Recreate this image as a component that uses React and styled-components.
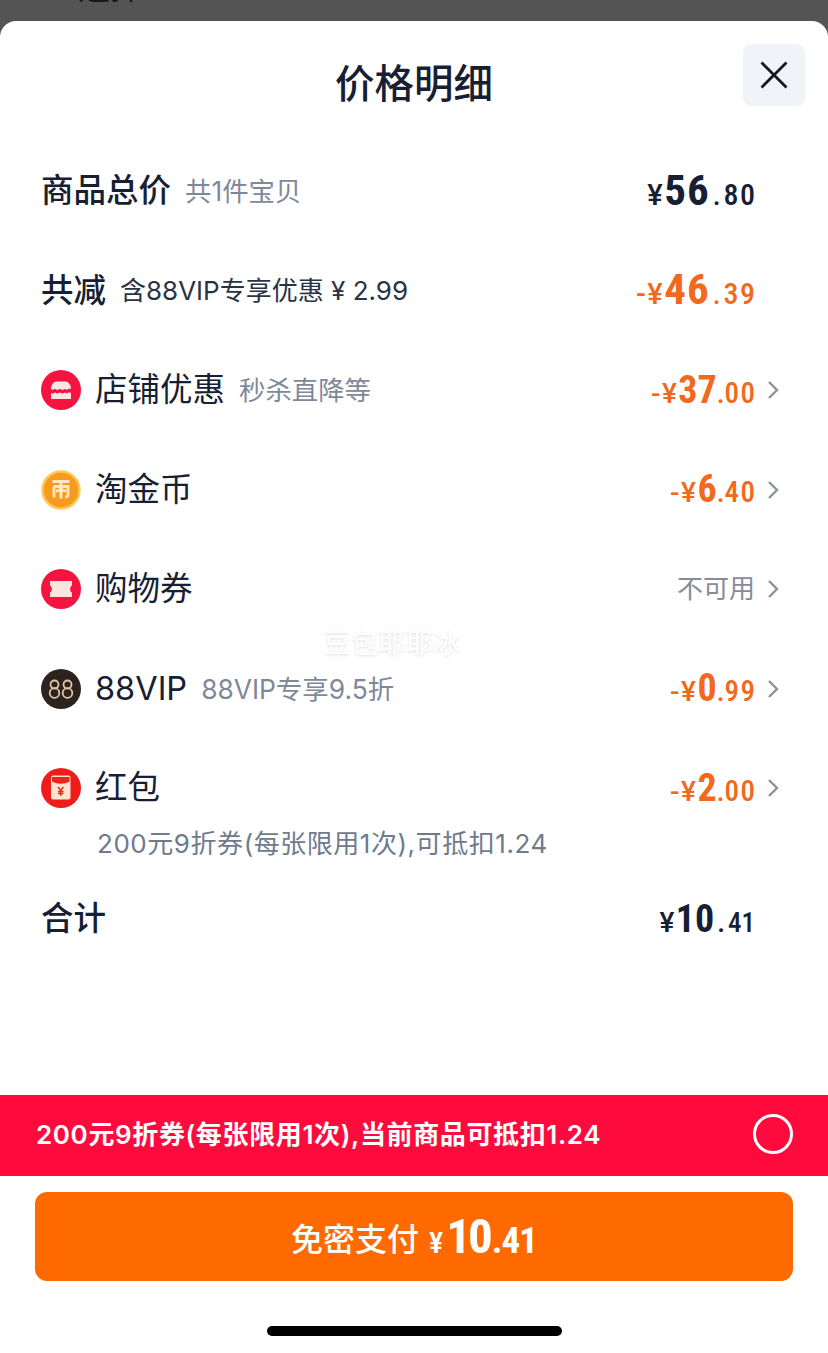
import React from 'react';
import styled, { createGlobalStyle } from 'styled-components';

const GlobalStyle = createGlobalStyle`
  html, body {
    margin: 0;
    padding: 0;
    background: #545454;
  }
  body {
    font-family: Inter, "Noto Sans CJK SC", "Noto Sans", sans-serif;
  }
`;

const Screen = styled.div`
  width: 828px;
  height: 1353px;
  display: flex;
  flex-direction: column;
  overflow: hidden;
  background: #545454;
`;

const Backdrop = styled.div`
  height: 21px;
  flex: none;
  padding-left: 78px;
  overflow: hidden;
  color: #16181c;
  font-size: 32px;
  line-height: 40px;
  & > span {
    display: block;
    margin-top: -32px;
  }
`;

const Sheet = styled.div`
  position: relative;
  flex: 1;
  display: flex;
  flex-direction: column;
  background: #fff;
  border-radius: 16px 16px 0 0;
`;

const Header = styled.div`
  display: grid;
  grid-template-columns: 1fr auto 1fr;
  padding: 23px 23px 0;
`;

const Title = styled.h1`
  grid-column: 2;
  margin: 15px 0 0;
  color: #172033;
  font-size: 39.5px;
  line-height: 50px;
  font-weight: 500;
`;

const CloseButton = styled.div`
  grid-column: 3;
  justify-self: end;
  width: 62px;
  height: 62px;
  display: flex;
  align-items: center;
  justify-content: center;
  background: #f0f3f7;
  border-radius: 8px;
`;

const List = styled.div`
  display: flex;
  flex-direction: column;
  gap: 59.5px;
  margin-top: 62px;
`;

const Row = styled.div`
  height: 40px;
  display: flex;
  align-items: center;
  padding: 0 49px 0 41px;
`;

const IconWrap = styled.div`
  width: 40px;
  height: 40px;
  flex: none;
  margin-right: 14px;
`;

const Label = styled.span`
  color: #172033;
  font-size: 32.5px;
  line-height: 40px;
  font-weight: ${(p) => (p.$bold ? 500 : 400)};
  white-space: nowrap;
`;

const Note = styled.span`
  margin-left: 14px;
  color: ${(p) => (p.$dark ? '#2a3344' : '#7f8899')};
  font-size: ${(p) => (p.$dark ? 26 : 26.4)}px;
  line-height: 40px;
  white-space: nowrap;
`;

const Value = styled.div`
  margin: 0 0 1px auto;
  display: flex;
  align-items: baseline;
  font-family: "Roboto Condensed", Roboto, "Noto Sans", sans-serif;
  font-weight: 500;
  color: ${(p) => (p.$accent ? '#f2681d' : '#172033')};
`;

const Currency = styled.span`
  font-family: Roboto, "Noto Sans", sans-serif;
  font-size: ${(p) => (p.$large ? 29 : 28)}px;
  letter-spacing: 1.5px;
`;

const Fraction = styled.span`
  font-size: ${(p) => p.$size}px;
  letter-spacing: ${(p) => p.$spacing}px;
  margin-right: ${(p) => -p.$spacing}px;
`;

const Dot = styled.span`
  margin: 0 ${(p) => p.$gap}px;
  font-size: 28px;
`;

const Whole = styled.span`
  font-size: ${(p) => (p.$large ? 43 : 38)}px;
  font-weight: 700;
  line-height: 40px;
  letter-spacing: ${(p) => (p.$large ? 1 : 0)}px;
`;

const Muted = styled.span`
  margin-left: auto;
  color: #858c98;
  font-size: 26px;
  line-height: 40px;
`;

const ChevronSlot = styled.div`
  width: 24px;
  height: 24px;
  flex: none;
  display: flex;
  align-items: center;
  justify-content: flex-end;
`;

const Detail = styled.div`
  margin: 21px 0 0 97px;
  color: #6f7a8d;
  font-size: 26px;
  line-height: 30px;
  letter-spacing: 0.55px;
  white-space: nowrap;
`;

const TotalRow = styled(Row)`
  margin-top: 40px;
`;

const Watermark = styled.div`
  position: absolute;
  left: 323px;
  top: 605px;
  color: #fff;
  font-size: 27.5px;
  line-height: 34px;
  text-shadow: 0 1px 3px rgba(0, 0, 0, 0.14);
`;

const Footer = styled.div`
  margin-top: auto;
`;

const CouponBar = styled.div`
  height: 81px;
  box-sizing: border-box;
  padding: 0 35px 4px 36px;
  display: flex;
  align-items: center;
  justify-content: space-between;
  background: #ff0a3c;
  color: #fff;
  font-size: 26px;
  font-weight: 600;
  letter-spacing: 0.63px;
`;

const CouponText = styled.span`
  margin-bottom: 2px;
`;

const Radio = styled.div`
  width: 40px;
  height: 40px;
  box-sizing: border-box;
  border: 3px solid #fff;
  border-radius: 50%;
`;

const PayButton = styled.div`
  height: 89px;
  margin: 16px 35px 0;
  display: flex;
  align-items: center;
  justify-content: center;
  background: #ff6a00;
  border-radius: 12px;
  color: #fff;
`;

const PayText = styled.span`
  font-size: 32px;
  font-weight: 500;
  margin-right: 10px;
`;

const PayValue = styled.div`
  display: flex;
  align-items: baseline;
  font-family: "Roboto Condensed", Roboto, sans-serif;
  font-weight: 700;
`;

const PayCurrency = styled.span`
  font-size: 30px;
  font-weight: 500;
  margin-right: 3px;
`;

const PayWhole = styled.span`
  font-size: 49px;
  line-height: 50px;
  letter-spacing: -3px;
`;

const PayFraction = styled.span`
  margin-left: 2px;
  font-size: 37px;
  letter-spacing: -1px;
`;

const HomeBar = styled.div`
  width: 295px;
  height: 10px;
  margin: 45px auto 17px;
  background: #000;
  border-radius: 5px;
`;

const Chevron = () => (
  <svg width="12" height="20" viewBox="0 0 12 20" fill="none">
    <path d="M2 2 L10 10 L2 18" stroke="#8d9199" strokeWidth="2.4" />
  </svg>
);

const CloseIcon = () => (
  <svg width="30" height="30" viewBox="0 0 30 30" fill="none">
    <path d="M2.500 2.500 L27.500 27.500 M27.500 2.500 L2.500 27.500" stroke="#14171f" strokeWidth="2.800" />
  </svg>
);

const StoreIcon = () => (
  <svg width="40" height="40" viewBox="0 0 40 40">
    <circle cx="20" cy="20" r="20" fill="#f5133f" />
    <path d="M10 19 C10 14 13 11.500 16 11.500 H24 C27 11.500 30 14 30 19 C27.500 17 26.500 21 25 19.500 C23.500 18 22 21 20 19.500 C18 18 16.500 21 15 19.500 C13.500 18 12.500 21 10 19 Z" fill="#fbe6e6" />
    <path d="M10 23 C12.500 25 13.500 21.500 15 23 C16.500 24.500 18 21.500 20 23 C22 24.500 23.500 21.500 25 23 C26.500 24.500 27.500 21 30 23 V29 H10 Z" fill="#fbe6e6" />
  </svg>
);

const CoinIcon = () => (
  <svg width="40" height="40" viewBox="0 0 40 40">
    <circle cx="20" cy="20" r="18.500" fill="#f79a1e" stroke="#ffc859" strokeWidth="2.500" />
    <path d="M11.500 11.500 H28.500 M20 11.500 V28.500 M13 16.500 H27 V25 C27 26.500 26 27 24 27 M13 16.500 V27.500 M15 21 C18 21 20 19 20 17 C20 19 22 21 25 21" fill="none" stroke="#ffe9c4" strokeWidth="2.800" />
  </svg>
);

const TicketIcon = () => (
  <svg width="40" height="40" viewBox="0 0 40 40">
    <circle cx="20" cy="20" r="20" fill="#f5133f" />
    <path d="M9 12 H31 V16.500 C28.500 17.500 28.500 22.500 31 23.500 V28 H9 V23.500 C11.500 22.500 11.500 17.500 9 16.500 Z" fill="#fbe4dc" />
  </svg>
);

const VipIcon = () => (
  <svg width="40" height="40" viewBox="0 0 40 40">
    <circle cx="20" cy="20" r="20" fill="#2c2320" />
    <g fill="none" stroke="#e2c6a0" strokeWidth="1.800">
      <circle cx="13.500" cy="15.500" r="4" />
      <circle cx="13.500" cy="24" r="4.800" />
      <circle cx="26.500" cy="15.500" r="4" />
      <circle cx="26.500" cy="24" r="4.800" />
    </g>
  </svg>
);

const PacketIcon = () => (
  <svg width="40" height="40" viewBox="0 0 40 40">
    <circle cx="20" cy="20" r="20" fill="#f01c1c" />
    <rect x="10" y="7.500" width="19.500" height="24" rx="2" fill="#fde4d0" />
    <path d="M11 9 H28.500 V13.500 C23 16.500 16.500 16.500 11 13.500 Z" fill="#e8261c" />
    <path d="M17 19 L19.750 22.500 L22.500 19 M17 23.500 H22.500 M17 25.500 H22.500 M19.750 22.500 V28" fill="none" stroke="#e8261c" strokeWidth="1.300" />
  </svg>
);

const Price = ({ prefix, whole, fraction, accent, large, total }) => (
  <Value $accent={accent}>
    <Currency $large={large}>{prefix}</Currency>
    <Whole $large={large}>{whole}</Whole>
    <Dot $gap={large || total ? 3 : 0}>.</Dot>
    <Fraction $size={total ? 27 : large ? 30 : 29} $spacing={total ? 0 : 1.5}>{fraction}</Fraction>
  </Value>
);

const discounts = [
  { key: 'store', icon: <StoreIcon />, label: '店铺优惠', note: '秒杀直降等', whole: '37', fraction: '00' },
  { key: 'coin', icon: <CoinIcon />, label: '淘金币', whole: '6', fraction: '40' },
  { key: 'ticket', icon: <TicketIcon />, label: '购物券', muted: '不可用' },
  { key: 'vip', icon: <VipIcon />, label: '88VIP', note: '88VIP专享9.5折', whole: '0', fraction: '99' },
  { key: 'packet', icon: <PacketIcon />, label: '红包', whole: '2', fraction: '00' },
];

const App = () => {
  return (
    <Screen>
      <GlobalStyle />
      <Backdrop>
        <span>选择</span>
      </Backdrop>
      <Sheet>
        <Header>
          <Title>价格明细</Title>
          <CloseButton>
            <CloseIcon />
          </CloseButton>
        </Header>

        <List>
          <Row>
            <Label $bold>商品总价</Label>
            <Note>共1件宝贝</Note>
            <Price large prefix="¥" whole="56" fraction="80" />
            <ChevronSlot />
          </Row>
          <Row>
            <Label $bold>共减</Label>
            <Note $dark>含88VIP专享优惠 ¥ 2.99</Note>
            <Price large accent prefix="-¥" whole="46" fraction="39" />
            <ChevronSlot />
          </Row>
          {discounts.map((item) => (
            <Row key={item.key}>
              <IconWrap>{item.icon}</IconWrap>
              <Label>{item.label}</Label>
              {item.note && <Note>{item.note}</Note>}
              {item.muted ? (
                <Muted>{item.muted}</Muted>
              ) : (
                <Price accent prefix="-¥" whole={item.whole} fraction={item.fraction} />
              )}
              <ChevronSlot>
                <Chevron />
              </ChevronSlot>
            </Row>
          ))}
        </List>

        <Detail>200元9折券(每张限用1次),可抵扣1.24</Detail>

        <TotalRow>
          <Label $bold>合计</Label>
          <Price total prefix="¥" whole="10" fraction="41" />
          <ChevronSlot />
        </TotalRow>

        <Watermark>豆包耶耶冰</Watermark>

        <Footer>
          <CouponBar>
            <CouponText>200元9折券(每张限用1次),当前商品可抵扣1.24</CouponText>
            <Radio />
          </CouponBar>
          <PayButton>
            <PayText>免密支付</PayText>
            <PayValue>
              <PayCurrency>¥</PayCurrency>
              <PayWhole>10</PayWhole>
              <PayFraction>.41</PayFraction>
            </PayValue>
          </PayButton>
          <HomeBar />
        </Footer>
      </Sheet>
    </Screen>
  );
};

export default App;
